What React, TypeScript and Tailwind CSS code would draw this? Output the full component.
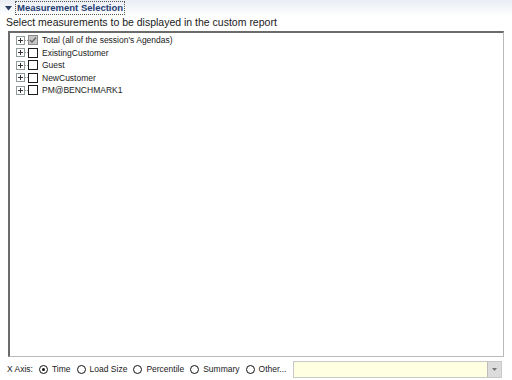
import React from "react";

const items = [
  { label: "Total (all of the session's Agendas)", checked: true },
  { label: "ExistingCustomer", checked: false },
  { label: "Guest", checked: false },
  { label: "NewCustomer", checked: false },
  { label: "PM@BENCHMARK1", checked: false },
];

const radios = [
  { label: "Time", on: true },
  { label: "Load Size", on: false },
  { label: "Percentile", on: false },
  { label: "Summary", on: false },
  { label: "Other...", on: false },
];

function Expander() {
  return (
    <div className="flex items-center">
      <div className="relative w-[9px] h-[9px] border border-[#919b9c] bg-white">
        <div className="absolute left-[1px] top-[3px] w-[5px] h-[1px] bg-[#333]" />
        <div className="absolute left-[3px] top-[1px] w-[1px] h-[5px] bg-[#333]" />
      </div>
      <div className="w-[3px] border-t border-dotted border-[#999]" />
    </div>
  );
}

function Checkbox({ checked }: { checked: boolean }) {
  return (
    <div
      className={`w-[10px] h-[10px] border flex items-center justify-center ${
        checked ? "border-[#8a8a8a] bg-[#c8c8c8]" : "border-[#1c1c1c] bg-white"
      }`}
    >
      {checked && (
        <svg width="8" height="8" viewBox="0 0 8 8">
          <path d="M1 4 L3 6 L7 1.5" stroke="#6e6e6e" strokeWidth="1.6" fill="none" />
        </svg>
      )}
    </div>
  );
}

function Radio({ on }: { on: boolean }) {
  return (
    <div className="w-[9px] h-[9px] rounded-full border-[1.5px] border-[#111] bg-white flex items-center justify-center">
      {on && <div className="w-[3px] h-[3px] rounded-full bg-[#111]" />}
    </div>
  );
}

export default function App() {
  return (
    <div
      className="w-[512px] h-[380px] bg-white flex flex-col text-[10.5px] text-[#1a1a1a] overflow-hidden"
      style={{ fontFamily: "'Liberation Sans', Arial, sans-serif" }}
    >
      <div className="h-[16px] bg-gradient-to-b from-[#e9edf4] to-white flex items-center pl-[5px] pt-[1px]">
        <svg width="7" height="5" viewBox="0 0 7 5" className="mr-[3px]">
          <path d="M0 0 L7 0 L3.5 4.5 Z" fill="#2b3e66" />
        </svg>
        <span className="font-bold text-[#243c73] border border-dotted border-[#555] px-[1px] leading-[12px] text-[9.5px]">
          Measurement Selection
        </span>
      </div>
      <div className="pl-[6px] leading-[12px]">
        Select measurements to be displayed in the custom report
      </div>
      <div className="mx-[8px] mt-[3px] h-[327px] border-t-2 border-l-2 border-[#6b6b6b] border-r border-b border-r-[#b9b9b9] border-b-[#b9b9b9] bg-white pt-[1px] pl-[6px] text-[8.5px]">
        {items.map((it) => (
          <div key={it.label} className="flex items-center h-[12.5px]">
            <Expander />
            <Checkbox checked={it.checked} />
            <span className="ml-[4px] leading-[12px]">{it.label}</span>
          </div>
        ))}
      </div>
      <div className="flex items-center h-[22px] pl-[7px] pr-[10px] mt-[1px] text-[8.5px]">
        <span className="mr-[6px]">X Axis:</span>
        {radios.map((r) => (
          <div key={r.label} className="flex items-center mr-[6px]">
            <Radio on={r.on} />
            <span className="ml-[4px]">{r.label}</span>
          </div>
        ))}
        <div className="flex-1 ml-[1px] h-[17px] border border-[#c8c8c8] bg-[#ffffe1] flex justify-end">
          <div className="w-[14px] h-full bg-[#dcdcdc] border-l border-[#bcbcbc] flex items-center justify-center">
            <svg width="5" height="3" viewBox="0 0 5 3">
              <path d="M0 0 L5 0 L2.5 3 Z" fill="#777" />
            </svg>
          </div>
        </div>
      </div>
    </div>
  );
}
